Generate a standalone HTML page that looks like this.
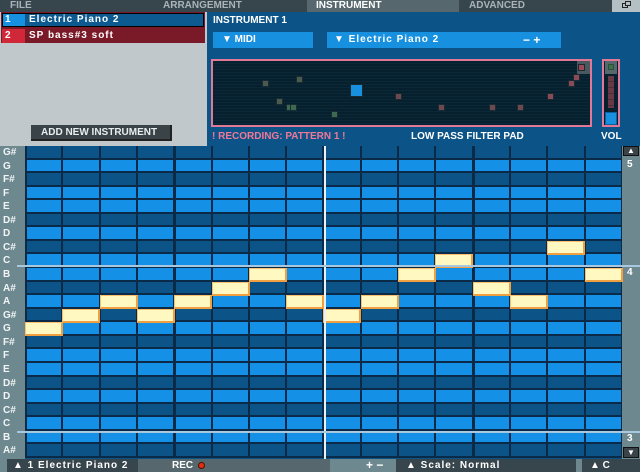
<!DOCTYPE html><html><head><style>
*{margin:0;padding:0;box-sizing:border-box}
body{width:640px;height:472px;overflow:hidden;background:#0c5488;font-family:"Liberation Sans",sans-serif;font-weight:bold;font-size:10px;color:#fff;position:relative}
.a{position:absolute}
.t{white-space:nowrap;line-height:1}
.m{letter-spacing:1px}
</style></head><body>
<div class="a" style="left:0;top:0;width:640px;height:12px;background:#37464c"></div>
<div class="a" style="left:307px;top:0;width:152px;height:12px;background:#56686e"></div>
<div class="a" style="left:612px;top:0;width:28px;height:12px;background:#b4c0c4"></div>
<div class="a t" style="left:10px;top:1px;color:#aab4b8">FILE</div>
<div class="a t" style="left:163px;top:1px;color:#aab4b8">ARRANGEMENT</div>
<div class="a t" style="left:316px;top:1px;color:#fff">INSTRUMENT</div>
<div class="a t" style="left:469px;top:1px;color:#aab4b8">ADVANCED</div>
<div class="a" style="left:622px;top:3px;width:6px;height:5px;border:1px solid #222"></div>
<div class="a" style="left:625px;top:1px;width:6px;height:5px;border:1px solid #222;background:#b4c0c4"></div>
<div class="a" style="left:0;top:12px;width:207px;height:134px;background:#c0c8cc"></div>
<div class="a" style="left:1px;top:12px;width:204px;height:16px;background:#7a1a28"></div>
<div class="a" style="left:2px;top:13px;width:202px;height:14px;background:#0c5a90;border:1px solid #000"></div>
<div class="a" style="left:3px;top:14px;width:22px;height:12px;background:#1890e0"></div>
<div class="a t" style="left:5px;top:15px">1</div>
<div class="a t m" style="left:29px;top:15px">Electric Piano 2</div>
<div class="a" style="left:1px;top:28px;width:204px;height:15px;background:#7a1a28"></div>
<div class="a" style="left:2px;top:29px;width:23px;height:14px;background:#d02838"></div>
<div class="a t" style="left:5px;top:31px">2</div>
<div class="a t m" style="left:29px;top:31px">SP bass#3 soft</div>
<div class="a" style="left:31px;top:125px;width:141px;height:16px;background:#3a4448;border-right:2px solid #222;border-bottom:2px solid #222"></div>
<div class="a t" style="left:41px;top:128px;color:#e8eef0">ADD NEW INSTRUMENT</div>
<div class="a t" style="left:213px;top:16px">INSTRUMENT 1</div>
<div class="a" style="left:213px;top:32px;width:100px;height:16px;background:#1890e0"></div>
<div class="a t" style="left:222px;top:35px">▼ MIDI</div>
<div class="a" style="left:327px;top:32px;width:234px;height:16px;background:#1890e0"></div>
<div class="a t m" style="left:334px;top:35px">▼ Electric Piano 2</div>
<div class="a t" style="left:523px;top:34px;font-size:12px">− +</div>
<div class="a" style="left:211px;top:59px;width:381px;height:68px;border:2px solid #e07898;background:repeating-linear-gradient(#07202e 0 2px,#0a2838 2px 3px)"></div>
<div class="a" style="left:602px;top:59px;width:18px;height:68px;border:2px solid #e07898;background:#07202e"></div>
<div class="a" style="left:605px;top:61px;width:12px;height:13px;background:#56686e"></div>
<div class="a" style="left:608px;top:64px;width:6px;height:6px;background:#3c7050;border:1px solid #2a5038"></div>
<div class="a" style="left:608px;top:76px;width:6px;height:32px;background:repeating-linear-gradient(#6a3848 0 5px,#4a3038 5px 6px)"></div>
<div class="a" style="left:605px;top:112px;width:12px;height:13px;background:#1890e0;border:1px solid #0a60a0"></div>
<div class="a" style="left:577px;top:61px;width:13px;height:13px;background:#4a5860"></div>
<div class="a t" style="left:212px;top:132px;color:#f07898">! RECORDING: PATTERN 1 !</div>
<div class="a t" style="left:411px;top:132px">LOW PASS FILTER PAD</div>
<div class="a t" style="left:601px;top:132px">VOL</div>
<div id="pad"></div>
<div class="a" style="left:0;top:146px;width:25px;height:313px;background:#6e8890"></div>
<div class="a" style="left:622px;top:146px;width:18px;height:313px;background:#6e8890"></div>
<div id="g"></div>
<div class="a" style="left:324px;top:146px;width:2px;height:313px;background:#e8f0f8"></div>
<div class="a" style="left:17px;top:265px;width:623px;height:2px;background:#a8c8e0"></div>
<div class="a" style="left:17px;top:431px;width:623px;height:2px;background:#a8c8e0"></div>
<div class="a" style="left:623px;top:146px;width:16px;height:10px;background:#3a4448;border:1px solid #111"></div>
<div class="a t" style="left:627px;top:147px;font-size:8px">▲</div>
<div class="a" style="left:623px;top:447px;width:16px;height:11px;background:#3a4448;border:1px solid #111"></div>
<div class="a t" style="left:627px;top:449px;font-size:8px">▼</div>
<div class="a t" style="left:627px;top:160px">5</div>
<div class="a t" style="left:627px;top:268px">4</div>
<div class="a t" style="left:627px;top:434px">3</div>
<div class="a" style="left:0;top:459px;width:640px;height:13px;background:#6e8890"></div>
<div class="a" style="left:7px;top:459px;width:131px;height:13px;background:#37464c"></div>
<div class="a" style="left:138px;top:459px;width:192px;height:13px;background:#56686e"></div>
<div class="a" style="left:396px;top:459px;width:180px;height:13px;background:#37464c"></div>
<div class="a" style="left:582px;top:459px;width:58px;height:13px;background:#37464c"></div>
<div class="a t m" style="left:13px;top:461px">▲ 1 Electric Piano 2</div>
<div class="a t" style="left:172px;top:461px">REC</div>
<div class="a" style="left:198px;top:462px;width:7px;height:7px;border-radius:50%;background:#e03010;border:1px solid #501000"></div>
<div class="a t" style="left:366px;top:459px;font-size:12px">+ −</div>
<div class="a t m" style="left:406px;top:461px">▲ Scale: Normal</div>
<div class="a t" style="left:590px;top:461px">▲ C</div>
<script>
var names=["G#","G","F#","F","E","D#","D","C#","C","B","A#","A","G#","G","F#","F","E","D#","D","C#","C","B","A#"];
var h='',y0=146,rh=13.56,x0=25,cw=37.3;
names.forEach(function(n,i){
 var dark=n.indexOf('#')>0,y=Math.round(y0+i*rh),y2=Math.round(y0+(i+1)*rh);
 h+='<div class="a t" style="left:3px;top:'+(y+2)+'px;color:#f0f4f4">'+n+'</div>';
 for(var c=0;c<16;c++){var x=Math.round(x0+c*cw),x2=Math.round(x0+(c+1)*cw);
  h+='<div class="a" style="left:'+x+'px;top:'+y+'px;width:'+(x2-x)+'px;height:'+(y2-y)+'px;background:#0a2a48"><div class="a" style="left:'+(c%4==0?2:1)+'px;top:0;right:1px;bottom:2px;background:'+(dark?'#0c5488':'#1490e6')+'"></div></div>';}
});
var notes=[13,12,11,12,11,10,9,11,12,11,9,8,10,11,7,9];
notes.forEach(function(r,c){var x=Math.round(x0+c*cw),y=Math.round(y0+r*rh);
 h+='<div class="a" style="left:'+x+'px;top:'+y+'px;width:'+(Math.round(cw)+1)+'px;height:'+Math.round(rh)+'px;background:#fff8c0;border:1px solid #f8c070;border-right:2px solid #f0a040;border-bottom:2px solid #f0a040"></div>';});
document.getElementById('g').innerHTML=h;
var p=[[262,80,'#4a5a50'],[296,76,'#4a5a50'],[276,98,'#4a5a50'],[286,104,'#3c6a50'],[290,104,'#3c6a50'],[331,111,'#3c6a50'],[350,84,'#1890e0',13],[395,93,'#6a4a50'],[438,104,'#6a4a50'],[489,104,'#6a4a50'],[517,104,'#6a4a50'],[547,93,'#8a4a58'],[568,80,'#8a4a58'],[573,74,'#8a4a58'],[578,64,'#a04858']];
var s='';p.forEach(function(q){var w=q[3]||7;s+='<div class="a" style="left:'+q[0]+'px;top:'+q[1]+'px;width:'+w+'px;height:'+w+'px;background:'+q[2]+';border:1px solid #1a2a30"></div>';});
document.getElementById('pad').innerHTML=s;
</script>
</body></html>
